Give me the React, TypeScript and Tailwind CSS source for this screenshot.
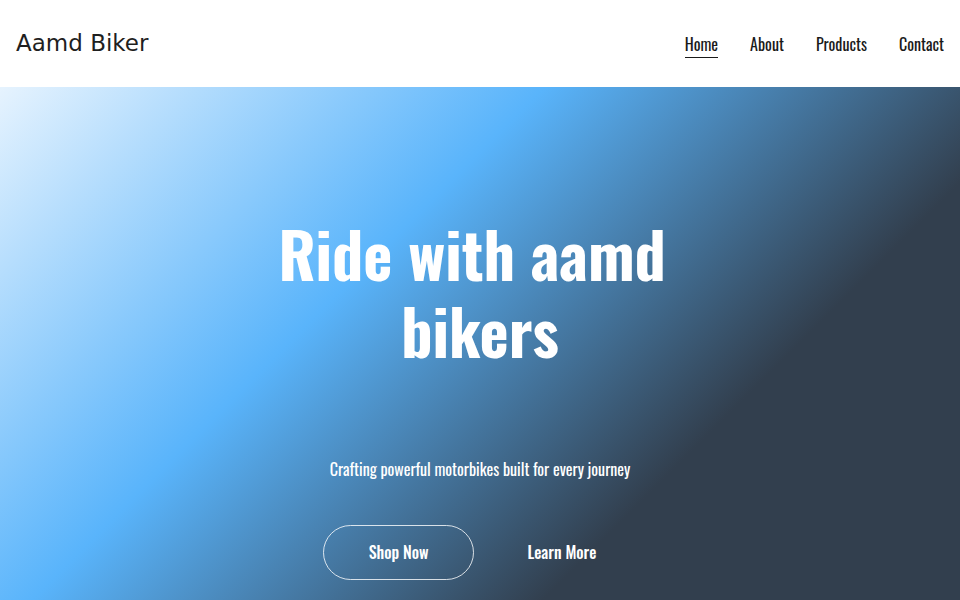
export default function App() {
  const nav = ["Home", "About", "Products", "Contact"];
  return (
    <div className="w-full min-h-[600px] bg-white">
      <header className="flex h-[87px] items-center justify-between bg-white pl-4 pr-4">
        <div className="font-['DejaVu_Sans',sans-serif] text-[23px] leading-none text-[#1f1f1f]">
          Aamd Biker
        </div>
        <nav className="flex items-center gap-8 font-['Oswald',sans-serif] text-[16px] text-[#1a1a1a]">
          {nav.map((n, i) => (
            <a
              key={n}
              href="#"
              className={
                i === 0
                  ? "border-b-[1.5px] border-[#1a1a1a] pb-[1px] pt-[2px] leading-[24px]"
                  : "border-b-[1.5px] border-transparent pb-[1px] pt-[2px] leading-[24px]"
              }
            >
              {n}
            </a>
          ))}
        </nav>
      </header>
      <section className="flex min-h-[513px] flex-col items-center bg-[linear-gradient(135deg,#e6f3fe_0%,#59b4fb_37%,#323f4e_71.7%,#323f4e_100%)] pt-[128px] text-center text-white">
        <h1 className="max-w-[500px] font-['Oswald',sans-serif] text-[62px] font-bold leading-[77px]">
          {"Ride with aamd\u00a0 bikers"}
        </h1>
        <p className="mt-[88px] font-['Oswald',sans-serif] text-[16px] font-normal leading-[24px]">
          Crafting powerful motorbikes built for every journey
        </p>
        <div className="mt-[44px] flex items-center gap-[7px] pl-[5px] font-['Oswald',sans-serif] text-[16px] font-medium">
          <button className="rounded-full border border-white/80 px-[45px] py-[14px] leading-[25px] text-white">
            Shop Now
          </button>
          <button className="rounded-full border border-transparent px-[45px] py-[14px] leading-[25px] text-white">
            Learn More
          </button>
        </div>
      </section>
    </div>
  );
}
